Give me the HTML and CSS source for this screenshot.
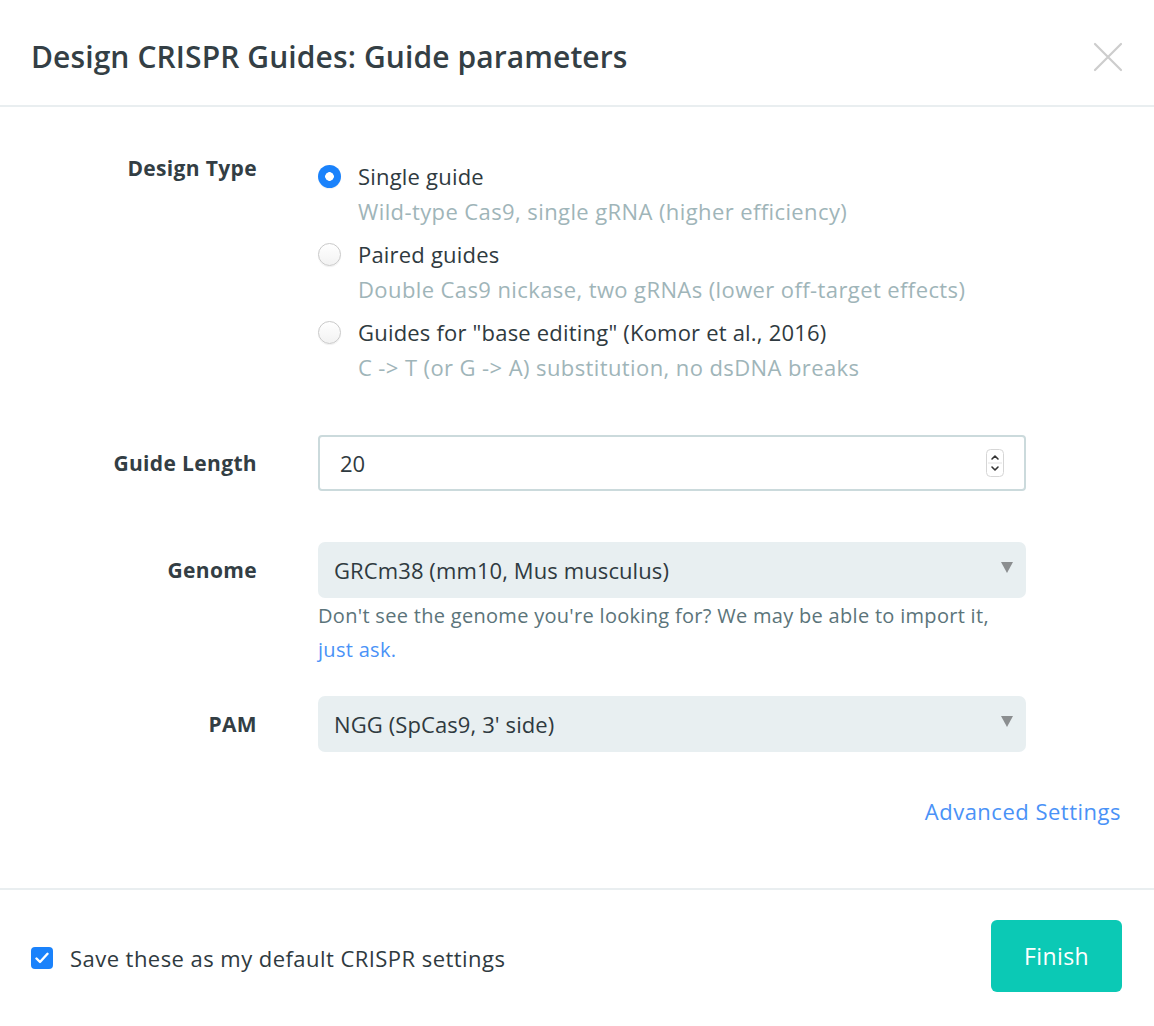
FILE: index.html
```html
<!DOCTYPE html>
<html>
<head>
<meta charset="utf-8">
<link rel="stylesheet" href="styles.css">
</head>
<body>
<div class="modal">
  <header class="modal-header">
    <h1 class="modal-title">Design CRISPR Guides: Guide parameters</h1>
    <button class="close-btn" aria-label="Close">
      <svg width="30" height="30" viewBox="0 0 30 30"><path d="M2 2 L28 28 M28 2 L2 28" stroke="#cdcdcd" stroke-width="2.2" stroke-linecap="round" fill="none"/></svg>
    </button>
  </header>

  <main class="modal-body">
    <div class="row row-design">
      <div class="label label-design">Design Type</div>
      <div class="control options">
        <div class="option">
          <span class="radio radio-on"></span>
          <div class="option-text">
            <div class="option-title">Single guide</div>
            <div class="option-desc">Wild-type Cas9, single gRNA (higher efficiency)</div>
          </div>
        </div>
        <div class="option">
          <span class="radio"></span>
          <div class="option-text">
            <div class="option-title">Paired guides</div>
            <div class="option-desc">Double Cas9 nickase, two gRNAs (lower off-target effects)</div>
          </div>
        </div>
        <div class="option">
          <span class="radio"></span>
          <div class="option-text">
            <div class="option-title">Guides for "base editing" (Komor et al., 2016)</div>
            <div class="option-desc">C -&gt; T (or G -&gt; A) substitution, no dsDNA breaks</div>
          </div>
        </div>
      </div>
    </div>

    <div class="row row-length">
      <div class="label">Guide Length</div>
      <div class="control">
        <div class="input-number">
          <span class="input-value">20</span>
          <span class="spinner">
            <svg width="18" height="28" viewBox="0 0 18 28">
              <rect x="0.5" y="0.5" width="17" height="27" rx="4" fill="#fff" stroke="#d6d6d6"/>
              <line x1="2" y1="14" x2="16" y2="14" stroke="#e2e2e2" stroke-width="1"/>
              <path d="M6 10 L9 7 L12 10" stroke="#333" stroke-width="1.6" fill="none" stroke-linecap="round" stroke-linejoin="round"/>
              <path d="M6 18 L9 21 L12 18" stroke="#333" stroke-width="1.6" fill="none" stroke-linecap="round" stroke-linejoin="round"/>
            </svg>
          </span>
        </div>
      </div>
    </div>

    <div class="row row-genome">
      <div class="label label-select">Genome</div>
      <div class="control">
        <div class="select">
          <span>GRCm38 (mm10, Mus musculus)</span>
          <svg class="arrow" width="12" height="11" viewBox="0 0 12 11"><path d="M0 0 H12 L6 11 Z" fill="#8b8e90"/></svg>
        </div>
        <p class="help">Don't see the genome you're looking for? We may be able to import it, <a class="link" href="#">just ask.</a></p>
      </div>
    </div>

    <div class="row row-pam">
      <div class="label">PAM</div>
      <div class="control">
        <div class="select">
          <span>NGG (SpCas9, 3' side)</span>
          <svg class="arrow" width="12" height="11" viewBox="0 0 12 11"><path d="M0 0 H12 L6 11 Z" fill="#8b8e90"/></svg>
        </div>
      </div>
    </div>

    <div class="advanced">
      <a class="link advanced-link" href="#">Advanced Settings</a>
    </div>
  </main>

  <footer class="modal-footer">
    <label class="save">
      <span class="checkbox">
        <svg width="14" height="12" viewBox="0 0 14 12"><path d="M1.5 6.5 L5 10 L12.5 1.8" stroke="#fff" stroke-width="2.4" fill="none" stroke-linecap="round" stroke-linejoin="round"/></svg>
      </span>
      <span class="save-text">Save these as my default CRISPR settings</span>
    </label>
    <button class="finish">Finish</button>
  </footer>
</div>
</body>
</html>
```

FILE: styles.css
```css
* { box-sizing: border-box; }

html, body {
  margin: 0;
  padding: 0;
  background: #ffffff;
}

body {
  font-family: "Open Sans", "Lato", "Liberation Sans", sans-serif;
  color: #323d43;
  width: 1154px;
  height: 1026px;
  overflow: hidden;
}

.modal {
  display: flex;
  flex-direction: column;
  height: 1026px;
}

.modal-header {
  height: 107px;
  border-bottom: 2px solid #e9eef0;
  display: flex;
  align-items: center;
  justify-content: space-between;
  padding: 8px 31px 0 31px;
}

.modal-title {
  margin: 0;
  font-size: 30px;
  font-weight: 600;
  color: #343f45;
  letter-spacing: 0.1px;
}

.close-btn {
  background: none;
  border: none;
  padding: 0;
  width: 30px;
  height: 30px;
  display: flex;
  cursor: pointer;
}

.modal-body {
  padding: 43px 33px 0 0;
  flex: 1;
}

.row {
  display: grid;
  grid-template-columns: 257px 708px;
  column-gap: 61px;
}

.label {
  text-align: right;
  font-size: 21px;
  font-weight: 700;
  color: #333e44;
  line-height: 36px;
  letter-spacing: 0.35px;
}

.row-design .label { align-self: start; }

.row-length { margin-top: 50px; align-items: center; }
.row-genome { margin-top: 51px; }
.row-genome .label { line-height: 56px; }
.row-pam { margin-top: 29px; align-items: center; }

.options {
  padding-top: 9px;
  display: flex;
  flex-direction: column;
  gap: 8px;
}

.option {
  display: flex;
  align-items: flex-start;
}

.radio {
  width: 23px;
  height: 23px;
  border-radius: 50%;
  margin: 6px 17px 0 0;
  flex: none;
  background: linear-gradient(#ffffff, #f2f2f2);
  border: 1px solid #c9c9c9;
  box-shadow: 0 1px 1px rgba(0,0,0,0.06);
}

.radio-on {
  border: none;
  background: radial-gradient(circle, #ffffff 0, #ffffff 4px, #1a82fb 4.6px);
}

.option-title {
  font-size: 22px;
  line-height: 35px;
  color: #2f3a40;
  letter-spacing: 0.2px;
}

.option-desc {
  font-size: 22px;
  line-height: 35px;
  color: #9fb5b9;
  letter-spacing: 0.4px;
}

.input-number {
  height: 56px;
  border: 2px solid #cbdadc;
  border-radius: 4px;
  display: flex;
  align-items: center;
  justify-content: space-between;
  padding: 0 20px 0 20px;
}

.input-value {
  font-size: 22px;
  color: #2f3a40;
}

.spinner { display: flex; }

.select {
  height: 56px;
  background: #e8eff1;
  border-radius: 7px;
  display: flex;
  align-items: center;
  justify-content: space-between;
  padding: 0 13px 0 16px;
  font-size: 22px;
  color: #2f3a40;
  letter-spacing: 0.1px;
}

.arrow {
  margin-top: -6px;
}

.help {
  margin: 1px 0 0 0;
  font-size: 20px;
  line-height: 34px;
  color: #5b747a;
  letter-spacing: 0.3px;
}

.link {
  color: #4a92f7;
  text-decoration: none;
}

.advanced {
  margin-top: 44px;
  text-align: right;
  line-height: 30px;
}

.advanced-link {
  font-size: 22px;
  letter-spacing: 0.5px;
}

.modal-footer {
  border-top: 2px solid #e9eef0;
  height: 138px;
  display: flex;
  align-items: center;
  justify-content: space-between;
  padding: 0 32px 4px 31px;
}

.save {
  display: flex;
  align-items: center;
  gap: 17px;
  margin-top: 4px;
}

.checkbox {
  width: 22px;
  height: 22px;
  border-radius: 4px;
  background: #1a82fb;
  display: flex;
  align-items: center;
  justify-content: center;
}

.save-text {
  font-size: 22px;
  color: #2f3a40;
  letter-spacing: 0.45px;
}

.finish {
  width: 131px;
  height: 72px;
  border: none;
  border-radius: 6px;
  background: #0bc9b5;
  color: #ffffff;
  font-family: inherit;
  font-size: 23px;
  font-weight: 500;
  letter-spacing: 0.4px;
  cursor: pointer;
}
```
